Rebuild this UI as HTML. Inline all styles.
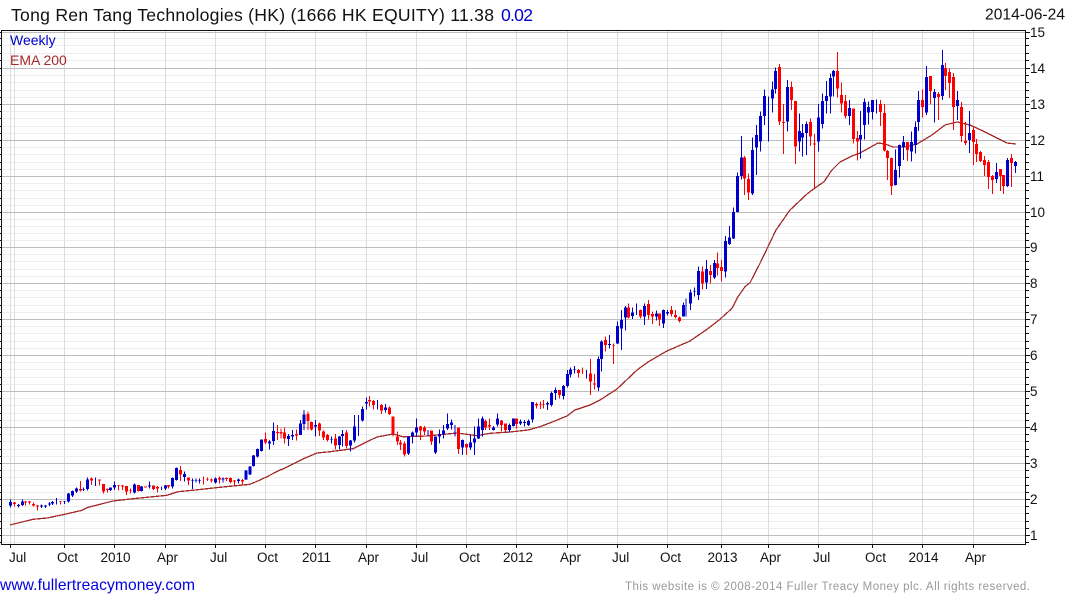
<!DOCTYPE html>
<html><head><meta charset="utf-8"><title>Tong Ren Tang Technologies (HK)</title>
<style>
html,body{margin:0;padding:0;background:#fff;width:1075px;height:600px;overflow:hidden}
svg{display:block;position:absolute;left:0;top:0}
text{font-family:"Liberation Sans",Arial,sans-serif;fill:#111}
.ax text{font-size:13.5px}
.bw,.bb,.rw,.rb{fill:none;shape-rendering:crispEdges}
.bw{stroke:#0000cc;stroke-width:3}
.bb{stroke:#0000cc;stroke-width:9}
.rw{stroke:#f00;stroke-width:3}
.rb{stroke:#f00;stroke-width:9}
</style></head><body>
<svg width="1075" height="600" viewBox="0 0 1075 600" xmlns="http://www.w3.org/2000/svg">
<defs>
<path id="mn" d="M0 38.5H1000M0 45.5H1000M0 53.5H1000M0 60.5H1000M0 75.5H1000M0 82.5H1000M0 90.5H1000M0 97.5H1000M0 111.5H1000M0 118.5H1000M0 126.5H1000M0 133.5H1000M0 147.5H1000M0 154.5H1000M0 162.5H1000M0 169.5H1000M0 183.5H1000M0 190.5H1000M0 198.5H1000M0 205.5H1000M0 219.5H1000M0 226.5H1000M0 233.5H1000M0 240.5H1000M0 254.5H1000M0 261.5H1000M0 269.5H1000M0 276.5H1000M0 290.5H1000M0 297.5H1000M0 305.5H1000M0 312.5H1000M0 326.5H1000M0 333.5H1000M0 341.5H1000M0 348.5H1000M0 362.5H1000M0 369.5H1000M0 377.5H1000M0 384.5H1000M0 398.5H1000M0 405.5H1000M0 413.5H1000M0 420.5H1000M0 434.5H1000M0 441.5H1000M0 449.5H1000M0 456.5H1000M0 470.5H1000M0 477.5H1000M0 485.5H1000M0 492.5H1000M0 506.5H1000M0 513.5H1000M0 521.5H1000M0 528.5H1000M0 542.5H1000"/>
<path id="mj" d="M0 32.5H1000M0 68.5H1000M0 104.5H1000M0 140.5H1000M0 176.5H1000M0 212.5H1000M0 247.5H1000M0 283.5H1000M0 319.5H1000M0 355.5H1000M0 391.5H1000M0 427.5H1000M0 463.5H1000M0 499.5H1000M0 535.5H1000"/>
</defs>
<g shape-rendering="crispEdges" fill="none">
<use href="#mn" stroke="#eeeeee" transform="translate(2,0) scale(1.023,1)"/>
<path stroke="#dcdcdc" d="M10.5 31V544M14.5 31V544M64.5 31V544M114.5 31V544M165.5 31V544M215.5 31V544M265.5 31V544M315.5 31V544M366.5 31V544M416.5 31V544M466.5 31V544M516.5 31V544M567.5 31V544M617.5 31V544M667.5 31V544M721.5 31V544M768.5 31V544M818.5 31V544M872.5 31V544M922.5 31V544M973.5 31V544"/>
<use href="#mj" stroke="#bdbdbd" transform="translate(2,0) scale(1.023,1)"/>
<use href="#mn" stroke="#111" transform="translate(1026,0) scale(.003,1)"/>
<use href="#mj" stroke="#111" transform="translate(1026,0) scale(.004,1)"/>
<use href="#mn" stroke="#111" transform="scale(.001,1)"/>
<use href="#mj" stroke="#111" transform="scale(.001,1)"/>
<path stroke="#111" d="M1.5 30.5H1025.5V544.5H1.5ZM10.5 545V548M64.5 545V548M114.5 545V548M165.5 545V548M215.5 545V548M265.5 545V548M315.5 545V548M366.5 545V548M416.5 545V548M466.5 545V548M516.5 545V548M567.5 545V548M617.5 545V548M667.5 545V548M721.5 545V548M768.5 545V548M818.5 545V548M872.5 545V548M922.5 545V548M973.5 545V548"/>
</g>

<polyline fill="none" stroke="#a52a2a" stroke-width="1.3" shape-rendering="crispEdges" points="10,525 20,522.5 33,519.3 47,518 63,514.7 82,510.3 88,507.3 113,501 133,498.7 167,495.3 178,491.7 195,490 220,487.3 250,484.3 260,480 267,476.7 280,470 283,469 303,459 317,453 330,451.7 353,448.7 367,441.7 377,437 393,434 403,436.7 427,436 457,433 477,435.7 490,433.3 510,432 528,430 540,426.7 553,421.7 567,416 575,410 590,405 600,400 617,389 637,370 648,362 660,355 667,351 690,341 707,329.3 720,319.3 732,308.3 738,296.7 745,286.7 750,282.7 760,263.3 768,246.7 776,230 790,210 807,194 815,188 824,181.7 832,170 840,162 852,156 860,153 878,143 885,144 893,147 905,147 917,144 932,135 945,125 957,122 970,125 983,131 997,138 1007,143 1016,144"/>

<!-- Region A -->
<g transform="translate(0,440) scale(.33333)">
<path class="bw" d="M31 178V203M55 192V203M67 178V198M124 194V204M136 195V204M148 186V198M158 183V195M170 174V194M193 183V192M205 159V188M217 151V171M229 142V159M251 143V153M262 113V151M286 113V138M332 142V153M343 125V150M403 130V161M424 138V155M448 124V145M484 140V150M496 135V150M518 113V145M529 82V122M553 95V125M577 115V147M588 115V128M599 115V130M646 112V131M669 113V127M715 115V130"/>
<path class="bb" d="M31 186V196M55 195V198M67 185V195M124 197V199M136 197V200M148 190V194M158 186V191M193 184V186M205 161V185M217 153V167M229 145V154M251 147V149M262 119V147M332 142V150M343 135V142M403 133V158M424 140V153M448 136V140M496 136V146M518 114V140M529 84V120M553 102V111M577 120V122M588 120V122M599 120V122M646 115V128M669 116V119M715 119V123"/>
<path class="rw" d="M43 186V200M77 183V196M89 183V194M101 187V200M113 195V212M181 183V193M241 123V155M274 113V135M298 118V137M310 132V160M322 145V158M355 135V151M367 135V150M380 138V165M391 145V160M415 135V155M436 139V143M460 136V150M472 138V158M506 135V146M541 78V123M565 113V135M611 110V133M622 113V123M634 115V128M658 110V130M680 112V123M691 112V130M703 120V135M727 117V133"/>
<path class="rb" d="M43 187V192M77 184V188M89 185V187M101 192V197M113 197V200M181 183V185M241 147V152M274 116V121M298 118V122M310 132V155M322 147V150M355 135V137M367 137V139M380 138V155M391 150V152M415 135V153M436 140V142M460 136V147M472 141V146M506 135V140M541 90V104M565 113V122M622 117V119M634 118V122M658 114V118M680 114V117M691 114V126M703 122V124M727 120V124"/>
</g>

<!-- Region B -->
<g transform="translate(240,390) scale(.33333)">
<path class="bw" d="M18 240V270M30 228V255M41 195V230M52 175V203M65 148V185M88 150V178M100 98V165M145 132V168M157 120V150M181 90V135M192 60V120M227 90V140M275 140V160M298 138V178M308 120V170M332 150V185M344 75V157M356 75V138M367 50V95M380 22V58M412 30V58M436 42V67M505 138V195M517 125V160M529 85V140M564 120V138M586 140V192M598 118V160M610 105V145M622 70V120M634 88V118M645 105V140M667 148V195M691 135V180M703 110V195M716 85V147M727 80V140M760 108V122M772 70V110M808 100V128"/>
<path class="bb" d="M18 242V268M30 230V253M41 197V228M52 177V200M65 149V183M88 155V161M100 123V153M145 138V147M157 135V140M181 100V135M192 73V102M227 105V110M275 148V150M298 140V165M308 132V138M332 152V167M344 110V152M367 57V92M380 36V41M436 52V60M505 140V190M517 128V140M529 112V128M586 140V187M598 132V140M610 122V132M622 102V115M634 98V105M667 150V172M691 158V172M703 145V158M716 110V145M727 85V120M760 112V120M772 85V103M808 105V120"/>
<path class="rw" d="M77 128V162M112 105V150M123 115V145M134 113V160M169 118V152M204 65V120M214 95V122M238 97V138M250 122V150M262 132V155M286 132V178M319 120V175M389 18V50M400 30V58M424 42V72M448 50V75M459 80V140M472 125V165M482 150V180M493 155V200M541 108V150M553 108V135M575 122V165M655 112V192M679 160V195M736 88V120M749 85V120M784 90V125M797 100V125"/>
<path class="rb" d="M77 147V157M112 126V129M123 126V130M134 128V145M169 132V137M204 72V93M214 96V118M238 100V122M250 125V142M262 135V150M286 145V167M319 128V168M389 30V35M400 33V45M424 45V62M448 53V72M459 80V130M472 140V155M482 158V164M493 160V194M541 110V122M553 112V125M575 122V155M655 112V177M679 162V172M736 93V112M749 105V110M784 92V105M797 100V120"/>
</g>

<!-- Region C -->
<g transform="translate(500,290) scale(.33333)">
<path class="bw" d="M41 385V410M61 388V405M73 390V410M85 388V408M97 336V398M142 335V360M154 305V350M166 292V330M190 285V328M202 240V292M211 232V262M223 228V250M259 240V265M295 200V303M304 152V245M328 135V175M352 95V162M364 60V180M376 48V122M397 52V87M409 40V75M433 40V105M469 62V92M490 58V114M503 60V77"/>
<path class="bb" d="M41 385V408M61 395V400M73 396V399M85 393V405M97 336V388M142 339V343M154 309V345M166 300V309M190 288V318M202 252V288M211 238V254M223 238V240M295 207V293M304 155V207M328 162V165M352 108V160M364 90V115M376 52V82M397 67V78M433 48V80M469 70V80M490 60V100M503 66V71"/>
<path class="rw" d="M49 385V415M110 338V355M122 335V357M130 330V355M178 300V325M235 237V262M247 232V252M271 207V315M283 252V298M316 140V185M340 160V222M386 40V85M421 58V85M445 30V88M457 65V102M478 70V108M514 48V80M526 60V85M538 80V98"/>
<path class="rb" d="M49 385V402M110 342V346M122 342V344M130 342V344M178 300V315M235 240V249M271 250V275M283 280V283M316 150V165M340 165V167M386 52V83M421 60V80M445 42V75M457 72V80M478 70V88M514 60V72M526 75V81M538 82V93"/>
</g>

<!-- Region D -->
<g transform="translate(680,130) scale(.33333)">
<path class="bw" d="M10 518V560M18 505V560M31 478V540M43 472V500M55 410V510M79 390V477M103 390V447M136 318V443M148 288V345M160 232V327M172 128V248M184 18V148M217 22V195"/>
<path class="bb" d="M10 525V560M31 487V520M43 483V485M55 423V495M79 417V458M103 399V443M136 333V425M148 322V342M160 246V325M172 138V246M184 83V138M217 60V190"/>
<path class="rw" d="M67 410V478M91 405V460M112 368V437M124 390V455M193 78V195M205 130V210"/>
<path class="rb" d="M67 425V460M91 423V435M112 400V414M124 411V423M193 82V145M205 147V188"/>
</g>

<!-- Region E -->
<g transform="translate(735,30) scale(.33333)">
<path class="bw" d="M64 285V435M76 245V365M88 178V285M100 200V335M112 155V248M121 113V190M157 150V305M193 250V365M202 282V380M214 275V375M250 222V365M262 190V295M274 153V250M286 130V250M295 120V200M343 210V285M376 243V385M388 205V328M400 215V283M412 210V268M424 208V250M481 358V466M493 343V443"/>
<path class="bb" d="M64 315V353M76 258V335M88 198V258M112 178V205M121 123V177M157 171V275M193 303V335M202 309V323M214 282V309M250 262V335M262 213V282M274 198V213M286 144V200M295 123V140M343 234V258M376 315V328M388 216V285M400 231V248M412 210V246M481 420V465M493 345V408"/>
<path class="rw" d="M133 102V285M145 222V372M169 155V240M181 213V402M226 265V348M238 312V473M307 66V203M319 157V248M331 195V265M355 235V340M367 303V392M436 210V288M448 222V365M457 360V450M469 383V495"/>
<path class="rb" d="M133 111V275M145 276V279M169 171V210M181 213V350M226 276V320M238 340V344M307 123V176M319 195V221M331 213V258M355 235V327M367 324V335M436 222V246M448 249V362M457 363V384M469 384V468"/>
</g>

<!-- Region F -->
<g transform="translate(900,30) scale(.33333)">
<path class="bw" d="M10 318V390M34 305V395M46 275V370M55 183V303M79 108V255M103 177V278M127 60V210M172 183V270M208 243V369M289 399V459M323 384V471M346 393V429"/>
<path class="bb" d="M10 336V351M34 336V365M46 291V345M55 210V276M79 141V248M103 186V204M127 105V198M172 210V228M208 309V330M289 426V447M323 390V468M346 396V408"/>
<path class="rw" d="M22 336V393M67 178V263M91 138V222M115 186V270M136 99V180M148 115V204M160 129V300M184 216V336M196 276V345M220 291V405M229 327V396M241 363V396M253 378V438M265 390V477M277 435V492M301 417V483M311 435V492M334 372V471"/>
<path class="rb" d="M22 336V360M67 210V231M91 138V183M115 192V201M136 114V138M148 126V159M160 141V231M184 231V318M196 333V339M220 300V336M229 342V372M241 366V393M253 390V405M265 396V441M277 438V450M301 417V438M311 435V468M334 384V399"/>
</g>

<text x="11" y="21" font-size="17.6" textLength="483" lengthAdjust="spacing">Tong Ren Tang Technologies (HK) (1666 HK EQUITY) 11.38</text>
<text x="501" y="21" font-size="17.6" textLength="32" lengthAdjust="spacing" style="fill:#0000cc">0.02</text>
<text x="985" y="19.5" font-size="15.6" textLength="80" lengthAdjust="spacing">2014-06-24</text>
<text x="10" y="45" font-size="14" style="fill:#0000cc">Weekly</text>
<text x="10" y="65" font-size="14" style="fill:#a52a2a">EMA 200</text>

<g class="ax">
<text x="1030" y="37">15</text><text x="1030" y="73">14</text><text x="1030" y="109">13</text><text x="1030" y="145">12</text><text x="1030" y="181">11</text><text x="1030" y="217">10</text><text x="1030" y="252">9</text><text x="1030" y="288">8</text><text x="1030" y="324">7</text><text x="1030" y="360">6</text><text x="1030" y="396">5</text><text x="1030" y="432">4</text><text x="1030" y="468">3</text><text x="1030" y="504">2</text><text x="1030" y="540">1</text>
<text x="9" y="562">Jul</text><text x="57" y="562">Oct</text><text x="100.5" y="562">2010</text><text x="157" y="562">Apr</text><text x="210" y="562">Jul</text><text x="257" y="562">Oct</text><text x="302" y="562">2011</text><text x="358" y="562">Apr</text><text x="411" y="562">Jul</text><text x="459" y="562">Oct</text><text x="503" y="562">2012</text><text x="560" y="562">Apr</text><text x="612" y="562">Jul</text><text x="660" y="562">Oct</text><text x="707.5" y="562">2013</text><text x="760" y="562">Apr</text><text x="813" y="562">Jul</text><text x="865" y="562">Oct</text><text x="908.5" y="562">2014</text><text x="965" y="562">Apr</text>
</g>

<text x="0" y="590" font-size="15.6" textLength="195" lengthAdjust="spacing" style="fill:#0000e0">www.fullertreacymoney.com</text>
<text x="625" y="590" font-size="11.5" textLength="405" lengthAdjust="spacing" style="fill:#999">This website is © 2008-2014 Fuller Treacy Money plc. All rights reserved.</text>
</svg>
</body></html>
